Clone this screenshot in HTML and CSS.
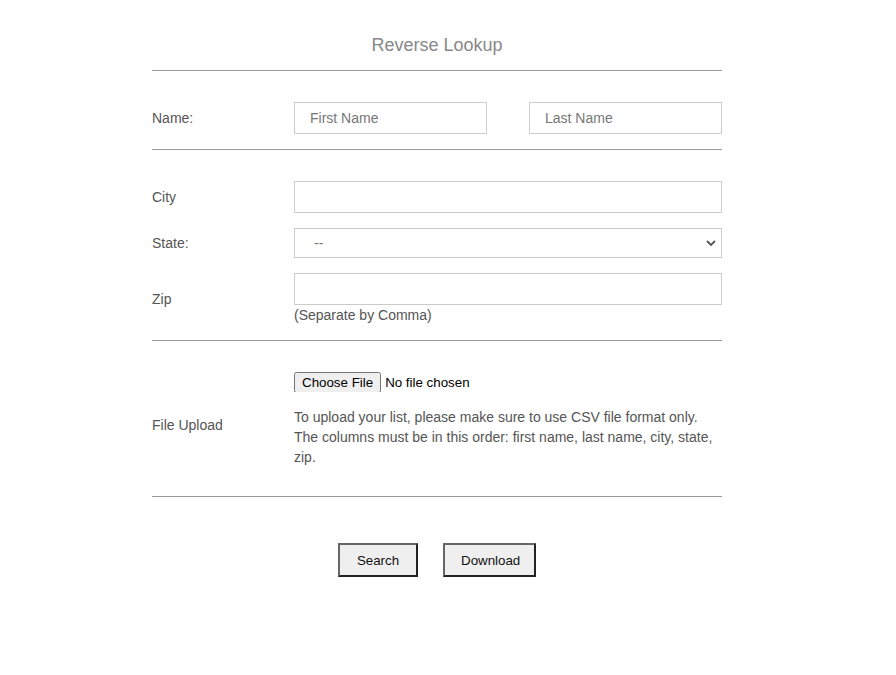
FILE: index.html
```html
<!DOCTYPE html>
<html lang="en">
<head>
    <meta charset="UTF-8">
    <meta name="viewport" content="width=device-width, initial-scale=1.0">
    <title>Reverse Lookup</title>
    <link rel="stylesheet" href="styles.css">
</head>
<body>
    <div class="lookup-container">
        <h1>Reverse Lookup</h1>
        <hr>

        <form id="lookup-form">
            <div class="section section-name">
                <div class="form-row">
                    <label for="first-name">Name:</label>
                    <div class="name-fields">
                        <input type="text" id="first-name" placeholder="First Name">
                        <input type="text" id="last-name" placeholder="Last Name">
                    </div>
                </div>
            </div>
            <hr>

            <div class="section section-address">
                <div class="form-row">
                    <label for="city">City</label>
                    <input type="text" id="city">
                </div>
                <div class="form-row">
                    <label for="state">State:</label>
                    <div class="select-wrap">
                        <select id="state">
                            <option>--</option>
                        </select>
                        <svg class="chevron" width="10" height="6" viewBox="0 0 10 6">
                            <path d="M1 1l4 4 4-4" fill="none" stroke="#555" stroke-width="1.8"/>
                        </svg>
                    </div>
                </div>
                <div class="form-row">
                    <label for="zip">Zip</label>
                    <div class="field-group">
                        <input type="text" id="zip">
                        <div class="hint">(Separate by Comma)</div>
                    </div>
                </div>
            </div>
            <hr>

            <div class="section section-upload">
                <div class="form-row">
                    <label for="upload">File Upload</label>
                    <div class="field-group">
                        <input type="file" id="upload" accept=".csv">
                        <p class="upload-note">To upload your list, please make sure to use CSV file format only. The columns must be in this order: first name, last name, city, state, zip.</p>
                    </div>
                </div>
            </div>
            <hr>

            <div class="actions">
                <button type="submit" class="btn-search">Search</button>
                <button type="button" class="btn-download">Download</button>
            </div>
        </form>
    </div>
</body>
</html>
```

FILE: styles.css
```css
:root {
    --text-color: #555;
    --title-color: #888;
    --line-color: #9a9a9a;
    --input-border: #ccc;
}

* {
    box-sizing: border-box;
}

body {
    margin: 0;
    font-family: 'Liberation Sans', Arial, sans-serif;
    color: var(--text-color);
    background-color: #fff;
    font-size: 14px;
}

.lookup-container {
    width: 570px;
    margin-left: 152px;
    padding-top: 34px;
}

h1 {
    margin: 0 0 14px;
    font-size: 18px;
    line-height: 22px;
    font-weight: normal;
    text-align: center;
    color: var(--title-color);
}

hr {
    margin: 0;
    border: none;
    border-top: 1px solid var(--line-color);
}

.section {
    display: flex;
    flex-direction: column;
    gap: 15px;
}

.section-name {
    padding: 31px 0 15px;
}

.section-address {
    padding: 31px 0 15px;
}

.section-upload {
    padding: 31px 0 18px;
}

.form-row {
    display: grid;
    grid-template-columns: 142px 1fr;
    align-items: center;
}

label {
    line-height: 20px;
}

.name-fields {
    display: flex;
    gap: 42px;
}

.name-fields input {
    width: 193px;
}

input[type="text"] {
    width: 100%;
    height: 32px;
    padding: 0 15px;
    border: 1px solid var(--input-border);
    font-family: inherit;
    font-size: 14px;
    color: #333;
    outline: none;
}

input::placeholder {
    color: #777;
}

.select-wrap {
    position: relative;
}

select {
    width: 100%;
    height: 30px;
    padding: 0 19px;
    border: 1px solid var(--input-border);
    background-color: #fff;
    font-family: inherit;
    font-size: 14px;
    color: #777;
    appearance: none;
    outline: none;
}

.chevron {
    position: absolute;
    right: 6px;
    top: 12px;
    pointer-events: none;
}

.hint {
    line-height: 20px;
}

input[type="file"] {
    display: block;
    font-family: inherit;
    font-size: 13.33px;
    color: #000;
    height: 20px;
}

.upload-note {
    margin: 15px 0 11px;
    line-height: 20px;
}

.actions {
    display: flex;
    justify-content: center;
    gap: 25px;
    padding-top: 46px;
}

.actions button {
    height: 34px;
    padding: 0 16px;
    background-color: #efefef;
    border: 2px solid;
    border-color: #666 #222 #222 #666;
    font-family: inherit;
    font-size: 13.33px;
    color: #111;
    cursor: pointer;
}

.btn-search {
    width: 80px;
}

.btn-download {
    width: 93px;
}
```
